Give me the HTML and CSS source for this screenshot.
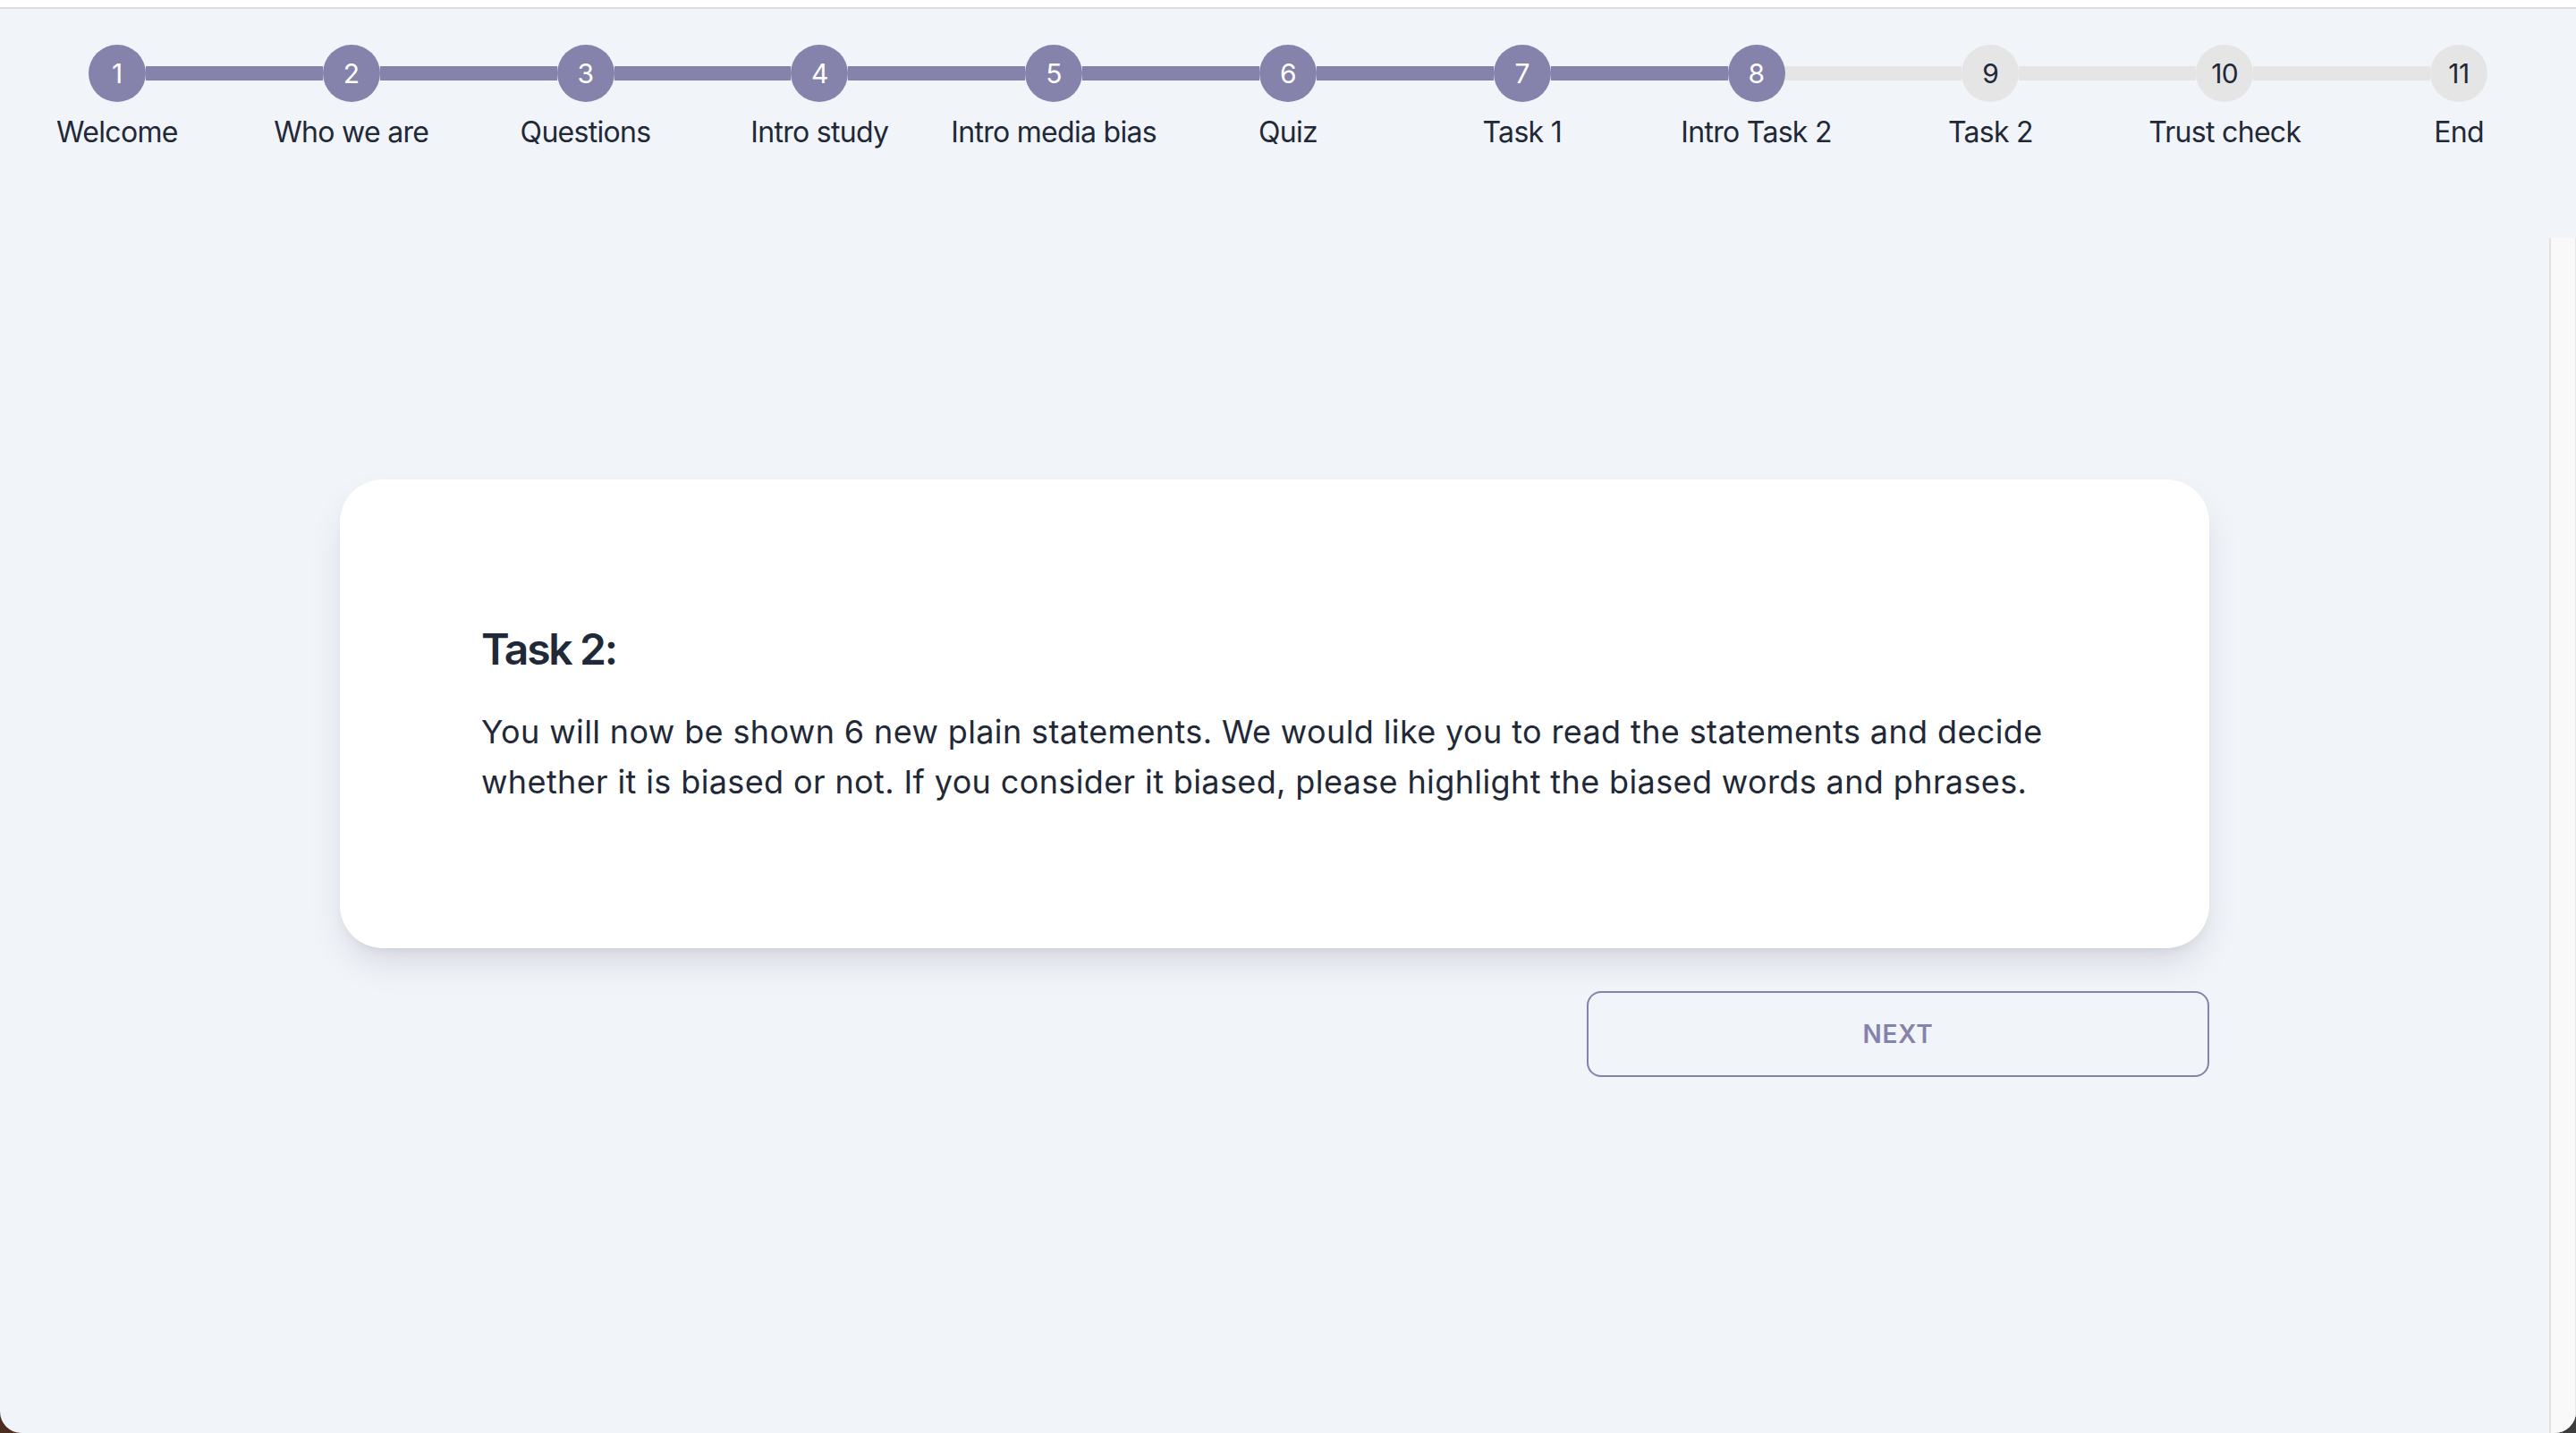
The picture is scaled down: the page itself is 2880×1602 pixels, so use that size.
FILE: index.html
```html
<!DOCTYPE html>
<html lang="en">
<head>
<meta charset="utf-8">
<title>Intro Task 2</title>
<link rel="stylesheet" href="styles.css">
</head>
<body>
<div class="window">
  <div class="topbar"></div>
  <nav class="stepper">
    <div class="step"><div class="step-top"><span class="seg none"></span><span class="dot done">1</span><span class="seg done"></span></div><span class="label">Welcome</span></div>
    <div class="step"><div class="step-top"><span class="seg done"></span><span class="dot done">2</span><span class="seg done"></span></div><span class="label">Who we are</span></div>
    <div class="step"><div class="step-top"><span class="seg done"></span><span class="dot done">3</span><span class="seg done"></span></div><span class="label">Questions</span></div>
    <div class="step"><div class="step-top"><span class="seg done"></span><span class="dot done">4</span><span class="seg done"></span></div><span class="label">Intro study</span></div>
    <div class="step"><div class="step-top"><span class="seg done"></span><span class="dot done">5</span><span class="seg done"></span></div><span class="label">Intro media bias</span></div>
    <div class="step"><div class="step-top"><span class="seg done"></span><span class="dot done">6</span><span class="seg done"></span></div><span class="label">Quiz</span></div>
    <div class="step"><div class="step-top"><span class="seg done"></span><span class="dot done">7</span><span class="seg done"></span></div><span class="label">Task 1</span></div>
    <div class="step"><div class="step-top"><span class="seg done"></span><span class="dot done">8</span><span class="seg todo"></span></div><span class="label">Intro Task 2</span></div>
    <div class="step"><div class="step-top"><span class="seg todo"></span><span class="dot todo">9</span><span class="seg todo"></span></div><span class="label">Task 2</span></div>
    <div class="step"><div class="step-top"><span class="seg todo"></span><span class="dot todo">10</span><span class="seg todo"></span></div><span class="label">Trust check</span></div>
    <div class="step"><div class="step-top"><span class="seg todo"></span><span class="dot todo">11</span><span class="seg none"></span></div><span class="label">End</span></div>
  </nav>
  <div class="main">
    <div class="content">
      <section class="card">
        <h2 class="card-title">Task 2:</h2>
        <p class="card-text">You will now be shown 6 new plain statements. We would like you to read the statements and decide<br>whether it is biased or not. If you consider it biased, please highlight the biased words and phrases.</p>
      </section>
      <div class="actions">
        <button class="next" type="button">Next</button>
      </div>
    </div>
    <div class="scrolltrack"></div>
  </div>
</div>
</body>
</html>
```
FILE: styles.css
```css
html, body {
  margin: 0;
  padding: 0;
}
body {
  width: 2880px;
  height: 1602px;
  overflow: hidden;
  background: linear-gradient(to right, #4b2e1f, #3c3c3c);
  font-family: Inter, "Noto Sans", "Liberation Sans", sans-serif;
  color: #1f2937;
}
.window {
  width: 2880px;
  height: 1602px;
  display: flex;
  flex-direction: column;
  background: #f1f4f9;
  border-radius: 0 0 24px 24px;
  overflow: hidden;
}
.topbar {
  height: 8px;
  background: #ffffff;
  border-bottom: 2px solid #dadde2;
  flex: none;
}
.stepper {
  flex: none;
  height: 216px;
  padding-top: 40px;
  display: flex;
}
.step {
  flex: 1 1 0;
  display: flex;
  flex-direction: column;
  align-items: center;
}
.step-top {
  width: 100%;
  height: 64px;
  display: flex;
  align-items: center;
}
.seg {
  flex: 1 1 0;
  height: 16px;
}
.seg.done { background: #8582ac; }
.seg.todo { background: #e4e5e4; }
.seg.none { background: transparent; }
.dot {
  flex: none;
  width: 64px;
  height: 64px;
  border-radius: 50%;
  display: flex;
  align-items: center;
  justify-content: center;
  font-size: 30px;
  line-height: 1;
  letter-spacing: -0.5px;
}
.dot.done { background: #8582ac; color: #ffffff; }
.dot.todo { background: #e4e5e4; color: #1f2937; }
.label {
  margin-top: 12px;
  font-size: 32px;
  line-height: 44px;
  letter-spacing: -0.7px;
  color: #1f2937;
  white-space: nowrap;
}
.main {
  flex: 1 1 auto;
  display: flex;
}
.content {
  flex: 1 1 auto;
  padding-top: 270px;
}
.scrolltrack {
  flex: none;
  width: 27px;
  background: #f9f9f9;
  border-left: 2px solid #e2e2e2;
  border-right: 1px solid #e8e8e8;
}
.card {
  width: 2090px;
  box-sizing: border-box;
  margin: 0 auto;
  padding: 158px 158px;
  background: #ffffff;
  border-radius: 48px;
  box-shadow: 0 20px 40px -6px rgba(17, 24, 39, 0.12), 0 8px 14px -8px rgba(17, 24, 39, 0.10);
}
.card-title {
  margin: 0;
  font-size: 48px;
  line-height: 64px;
  font-weight: 600;
  color: #1f2937;
  letter-spacing: -2.3px;
}
.card-text {
  margin: 32px 0 0;
  font-size: 36px;
  line-height: 56px;
  font-weight: 400;
  color: #1f2937;
  letter-spacing: 0.38px;
  white-space: nowrap;
}
.actions {
  width: 2090px;
  margin: 48px auto 0;
  display: flex;
  justify-content: flex-end;
}
.next {
  width: 696px;
  height: 96px;
  box-sizing: border-box;
  border: 2px solid #8582ac;
  border-radius: 16px;
  background: transparent;
  color: #8582ac;
  font-family: Inter, "Noto Sans", "Liberation Sans", sans-serif;
  font-size: 28px;
  font-weight: 600;
  text-transform: uppercase;
  letter-spacing: 0.8px;
  cursor: pointer;
}
```
